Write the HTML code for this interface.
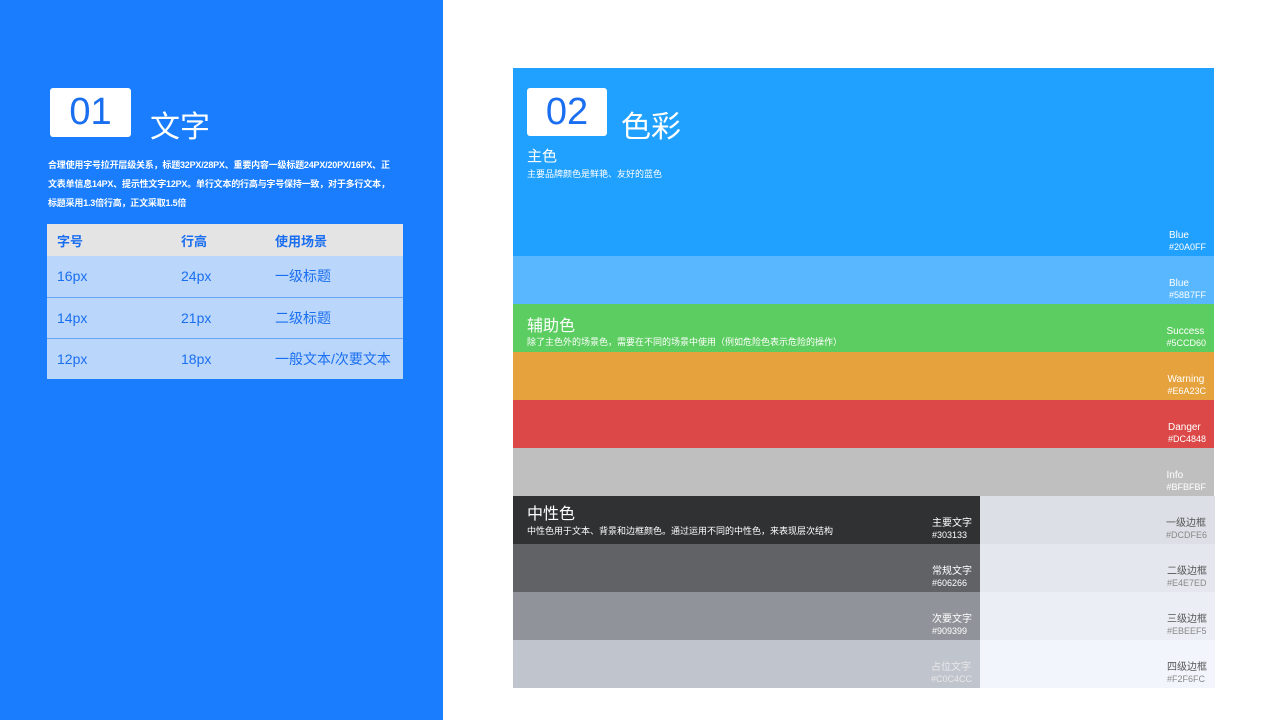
<!DOCTYPE html><html><head><meta charset="utf-8"><style>
*{margin:0;padding:0;box-sizing:border-box}
body{width:1280px;height:720px;position:relative;background:#fff;font-family:"Liberation Sans","Noto Sans CJK SC",sans-serif;overflow:hidden}
.abs{position:absolute}
.left{left:0;top:0;width:443px;height:720px;background:#197dfe}
.num{background:#fff;color:#1a6ef0;border-radius:3px;text-align:center;font-size:38px;line-height:48px}
.row{position:absolute;left:513px;width:701px;height:48px}
.lab{position:absolute;right:8px;bottom:4px;text-align:left;font-size:9px;line-height:10px;color:#fff}
.lab b{font-weight:normal;font-size:10px;display:block;line-height:12px}
td{height:41px;padding-left:10px;color:#1a6ef0;font-size:14px}
</style></head><body>
<div class="abs left"></div>
<div class="abs num" style="left:50px;top:88px;width:81px;height:49px">01</div>
<div class="abs" style="left:150px;top:102px;color:#fff;font-size:30px">文字</div>
<div class="abs" style="left:48px;top:156px;width:346px;color:#fff;font-size:9px;font-weight:bold;line-height:19px;letter-spacing:-0.2px">合理使用字号拉开层级关系，标题32PX/28PX、重要内容一级标题24PX/20PX/16PX、正文表单信息14PX、提示性文字12PX。单行文本的行高与字号保持一致，对于多行文本，标题采用1.3倍行高，正文采取1.5倍</div>
<table class="abs" style="left:47px;top:224px;width:356px;border-collapse:collapse;background:#bad7fb">
<tr style="background:#e4e4e4"><td style="height:32px;font-weight:bold;font-size:13px;width:124px">字号</td><td style="height:32px;font-weight:bold;font-size:13px;width:94px">行高</td><td style="height:32px;font-weight:bold;font-size:13px">使用场景</td></tr>
<tr style="border-bottom:1px solid #6aa5f5"><td>16px</td><td>24px</td><td>一级标题</td></tr>
<tr style="border-bottom:1px solid #6aa5f5"><td>14px</td><td>21px</td><td>二级标题</td></tr>
<tr><td>12px</td><td>18px</td><td>一般文本/次要文本</td></tr>
</table>
<div class="row" style="top:68px;height:188px;background:#20a0ff"><div class="lab"><b>Blue</b>#20A0FF</div></div>
<div class="abs num" style="left:527px;top:88px;width:80px;height:48px;color:#1a6ef0">02</div>
<div class="abs" style="left:621px;top:102px;color:#fff;font-size:30px">色彩</div>
<div class="abs" style="left:527px;top:145px;color:#fff;font-size:15px">主色</div>
<div class="abs" style="left:527px;top:167px;color:#fff;font-size:9px">主要品牌颜色是鲜艳、友好的蓝色</div>
<div class="row" style="top:256px;background:#58b7ff"><div class="lab"><b>Blue</b>#58B7FF</div></div>
<div class="row" style="top:304px;background:#5ccd60"><div class="lab"><b>Success</b>#5CCD60</div>
<div class="abs" style="left:14px;top:8px;color:#fff;font-size:16px">辅助色</div><div class="abs" style="left:14px;top:31px;color:#fff;font-size:9px">除了主色外的场景色，需要在不同的场景中使用（例如危险色表示危险的操作）</div></div>
<div class="row" style="top:352px;background:#e6a23c"><div class="lab"><b>Warning</b>#E6A23C</div></div>
<div class="row" style="top:400px;background:#dc4848"><div class="lab"><b>Danger</b>#DC4848</div></div>
<div class="row" style="top:448px;background:#bfbfbf"><div class="lab"><b>Info</b>#BFBFBF</div></div>
<div class="row" style="top:496px;width:467px;background:#303133"><div class="lab"><b>主要文字</b>#303133</div>
<div class="abs" style="left:14px;top:4px;color:#fff;font-size:16px">中性色</div><div class="abs" style="left:14px;top:28px;color:#fff;font-size:9px">中性色用于文本、背景和边框颜色。通过运用不同的中性色，来表现层次结构</div></div>
<div class="row" style="top:544px;width:467px;background:#606266"><div class="lab"><b>常规文字</b>#606266</div></div>
<div class="row" style="top:592px;width:467px;background:#909399"><div class="lab"><b>次要文字</b>#909399</div></div>
<div class="row" style="top:640px;width:467px;background:#c0c4cc"><div class="lab" style="color:#e8e8ea"><b>占位文字</b>#C0C4CC</div></div>
<div class="row" style="top:496px;left:980px;width:235px;background:#dcdfe6"><div class="lab" style="color:#888"><b style="color:#555">一级边框</b>#DCDFE6</div></div>
<div class="row" style="top:544px;left:980px;width:235px;background:#e4e7ed"><div class="lab" style="color:#888"><b style="color:#555">二级边框</b>#E4E7ED</div></div>
<div class="row" style="top:592px;left:980px;width:235px;background:#ebeef5"><div class="lab" style="color:#888"><b style="color:#555">三级边框</b>#EBEEF5</div></div>
<div class="row" style="top:640px;left:980px;width:235px;background:#f2f6fc"><div class="lab" style="color:#888"><b style="color:#555">四级边框</b>#F2F6FC</div></div>
</body></html>
